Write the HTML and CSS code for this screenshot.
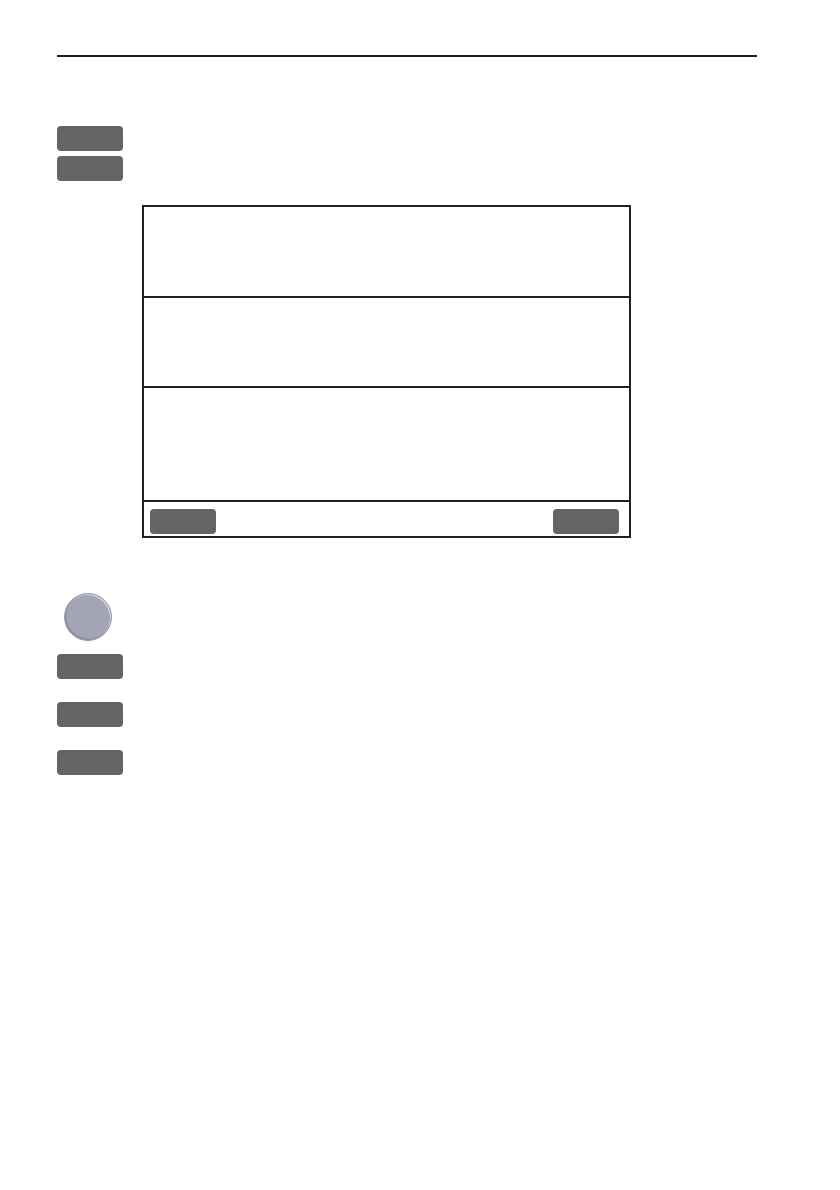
FILE: index.html
```html
<!DOCTYPE html>
<html>
<head>
<meta charset="utf-8">
<link rel="stylesheet" href="styles.css">
</head>
<body>
<div class="page">
  <div class="rule"></div>
  <div class="keys top-keys">
    <div class="key"></div>
    <div class="key"></div>
  </div>
  <div class="panel">
    <div class="row row1"></div>
    <div class="row row2"></div>
    <div class="row row3"></div>
    <div class="footer">
      <div class="key"></div>
      <div class="key"></div>
    </div>
  </div>
  <div class="knob"></div>
  <div class="keys bottom-keys">
    <div class="key"></div>
    <div class="key"></div>
    <div class="key"></div>
  </div>
</div>
</body>
</html>
```
FILE: styles.css
```css
html, body {
  margin: 0;
  padding: 0;
  background: #ffffff;
  font-family: "Liberation Sans", Arial, sans-serif;
}
.page {
  width: 840px;
  height: 1190px;
  padding-left: 57px;
  padding-top: 55px;
  box-sizing: border-box;
}
.rule {
  width: 700px;
  height: 2px;
  background: #231f20;
}
.keys {
  display: flex;
  flex-direction: column;
}
.key {
  width: 66px;
  height: 25px;
  border-radius: 4px;
  background: #656363;
}
.top-keys {
  margin-top: 69px;
  gap: 5px;
}
.panel {
  margin-top: 24px;
  margin-left: 85px;
  width: 489px;
  box-sizing: border-box;
  border: 2px solid #231f20;
  display: flex;
  flex-direction: column;
}
.row {
  border-bottom: 2px solid #231f20;
}
.row1 { height: 89px; }
.row2 { height: 88px; }
.row3 { height: 112px; }
.footer {
  height: 34px;
  box-sizing: border-box;
  padding: 7px 10px 2px 6px;
  display: flex;
  justify-content: space-between;
  align-items: flex-start;
}
.knob {
  margin-top: 55px;
  margin-left: 7px;
  width: 48px;
  height: 48px;
  border-radius: 50%;
  box-sizing: border-box;
  background: #a3a4b4;
  border: 1px solid #9a9bab;
  box-shadow: inset -1px 1px 1px rgba(255,255,255,0.6), inset 1px -1px 1px rgba(90,90,105,0.4);
}
.bottom-keys {
  margin-top: 13px;
  gap: 23px;
}
```
